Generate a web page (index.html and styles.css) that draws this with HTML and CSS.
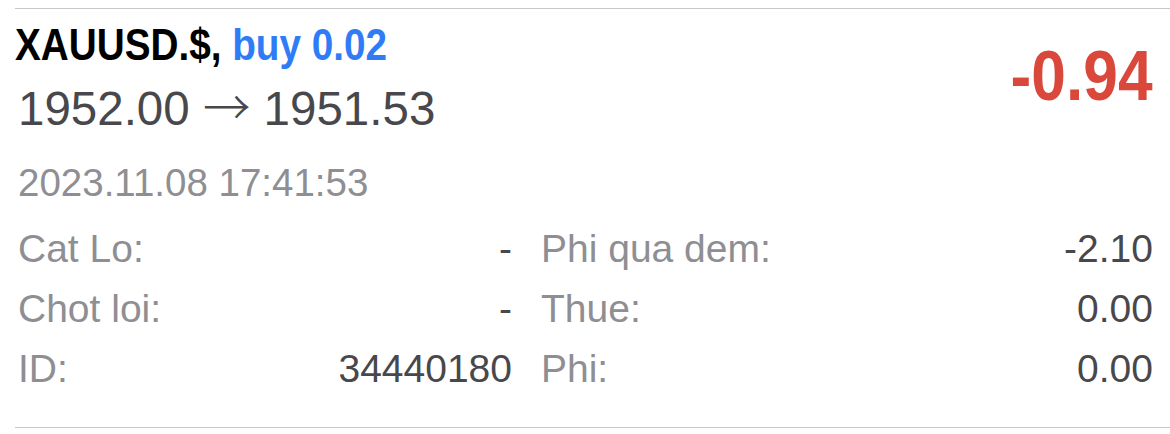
FILE: index.html
```html
<!DOCTYPE html>
<html lang="vi">
<head>
  <meta charset="UTF-8" />
  <meta name="viewport" content="width=device-width, initial-scale=1.0"/>
  <title>XAUUSD.$ - lenh</title>
  <link rel="stylesheet" href="styles.css">
</head>
<body>

<div class="trade">
  <div class="trade-head">
    <div class="trade-main">
      <div class="symbol"><span class="narrow">XAUUSD.$, <span class="side-buy">buy 0.02</span></span></div>
      <div class="prices">1952.00 <span class="arrow">&rarr;</span> 1951.53</div>
    </div>
    <div class="profit"><span class="narrow-r">-0.94</span></div>
  </div>

  <div class="open-time">2023.11.08 17:41:53</div>

  <div class="details">
    <div class="detail"><span class="label">Cat Lo:</span><span class="value">-</span></div>
    <div class="detail"><span class="label">Phi qua dem:</span><span class="value">-2.10</span></div>
    <div class="detail"><span class="label">Chot loi:</span><span class="value">-</span></div>
    <div class="detail"><span class="label">Thue:</span><span class="value">0.00</span></div>
    <div class="detail"><span class="label">ID:</span><span class="value">34440180</span></div>
    <div class="detail"><span class="label">Phi:</span><span class="value">0.00</span></div>
  </div>
</div>

</body>
</html>
```

FILE: styles.css
```css
body {
  font-family: 'Liberation Sans', Arial, sans-serif;
  margin: 0;
  background: #fff;
}
.trade {
  margin: 8px 0 0 15px;
  padding: 6px 17px 28px 0;
  border-top: 1px solid #c8c8cc;
  border-bottom: 1px solid #c8c8cc;
}
.trade-head {
  display: flex;
  justify-content: space-between;
  align-items: flex-start;
}
.symbol {
  font-weight: bold;
  font-size: 45px;
  line-height: 59px;
  color: #000;
  white-space: nowrap;
}
/* condensed bold look, no narrow face installed */
.narrow {
  display: inline-block;
  transform: scaleX(0.86);
  transform-origin: left center;
}
.side-buy { color: #2f7cf6; }
.prices {
  padding-left: 3px;
  font-size: 47.5px;
  line-height: 62px;
  color: #48484c;
}
.arrow {
  font-family: 'Noto Sans CJK SC', sans-serif;
  font-weight: 300;
}
.profit {
  margin-top: 26px;
  font-weight: bold;
  font-size: 70px;
  line-height: 70px;
  color: #d9483b;
}
.narrow-r {
  display: inline-block;
  transform: scaleX(0.89);
  transform-origin: right center;
}
.open-time {
  margin-top: 19px;
  padding-left: 3px;
  font-size: 38.5px;
  line-height: 48px;
  color: #8e8e93;
}
.details {
  margin-top: 12px;
  padding-left: 3px;
  display: grid;
  grid-template-columns: 494px 1fr;
  column-gap: 29px;
}
.detail {
  display: flex;
  justify-content: space-between;
  font-size: 39px;
  line-height: 60px;
}
.label { color: #8e8e93; }
.value { color: #48484c; }
```
